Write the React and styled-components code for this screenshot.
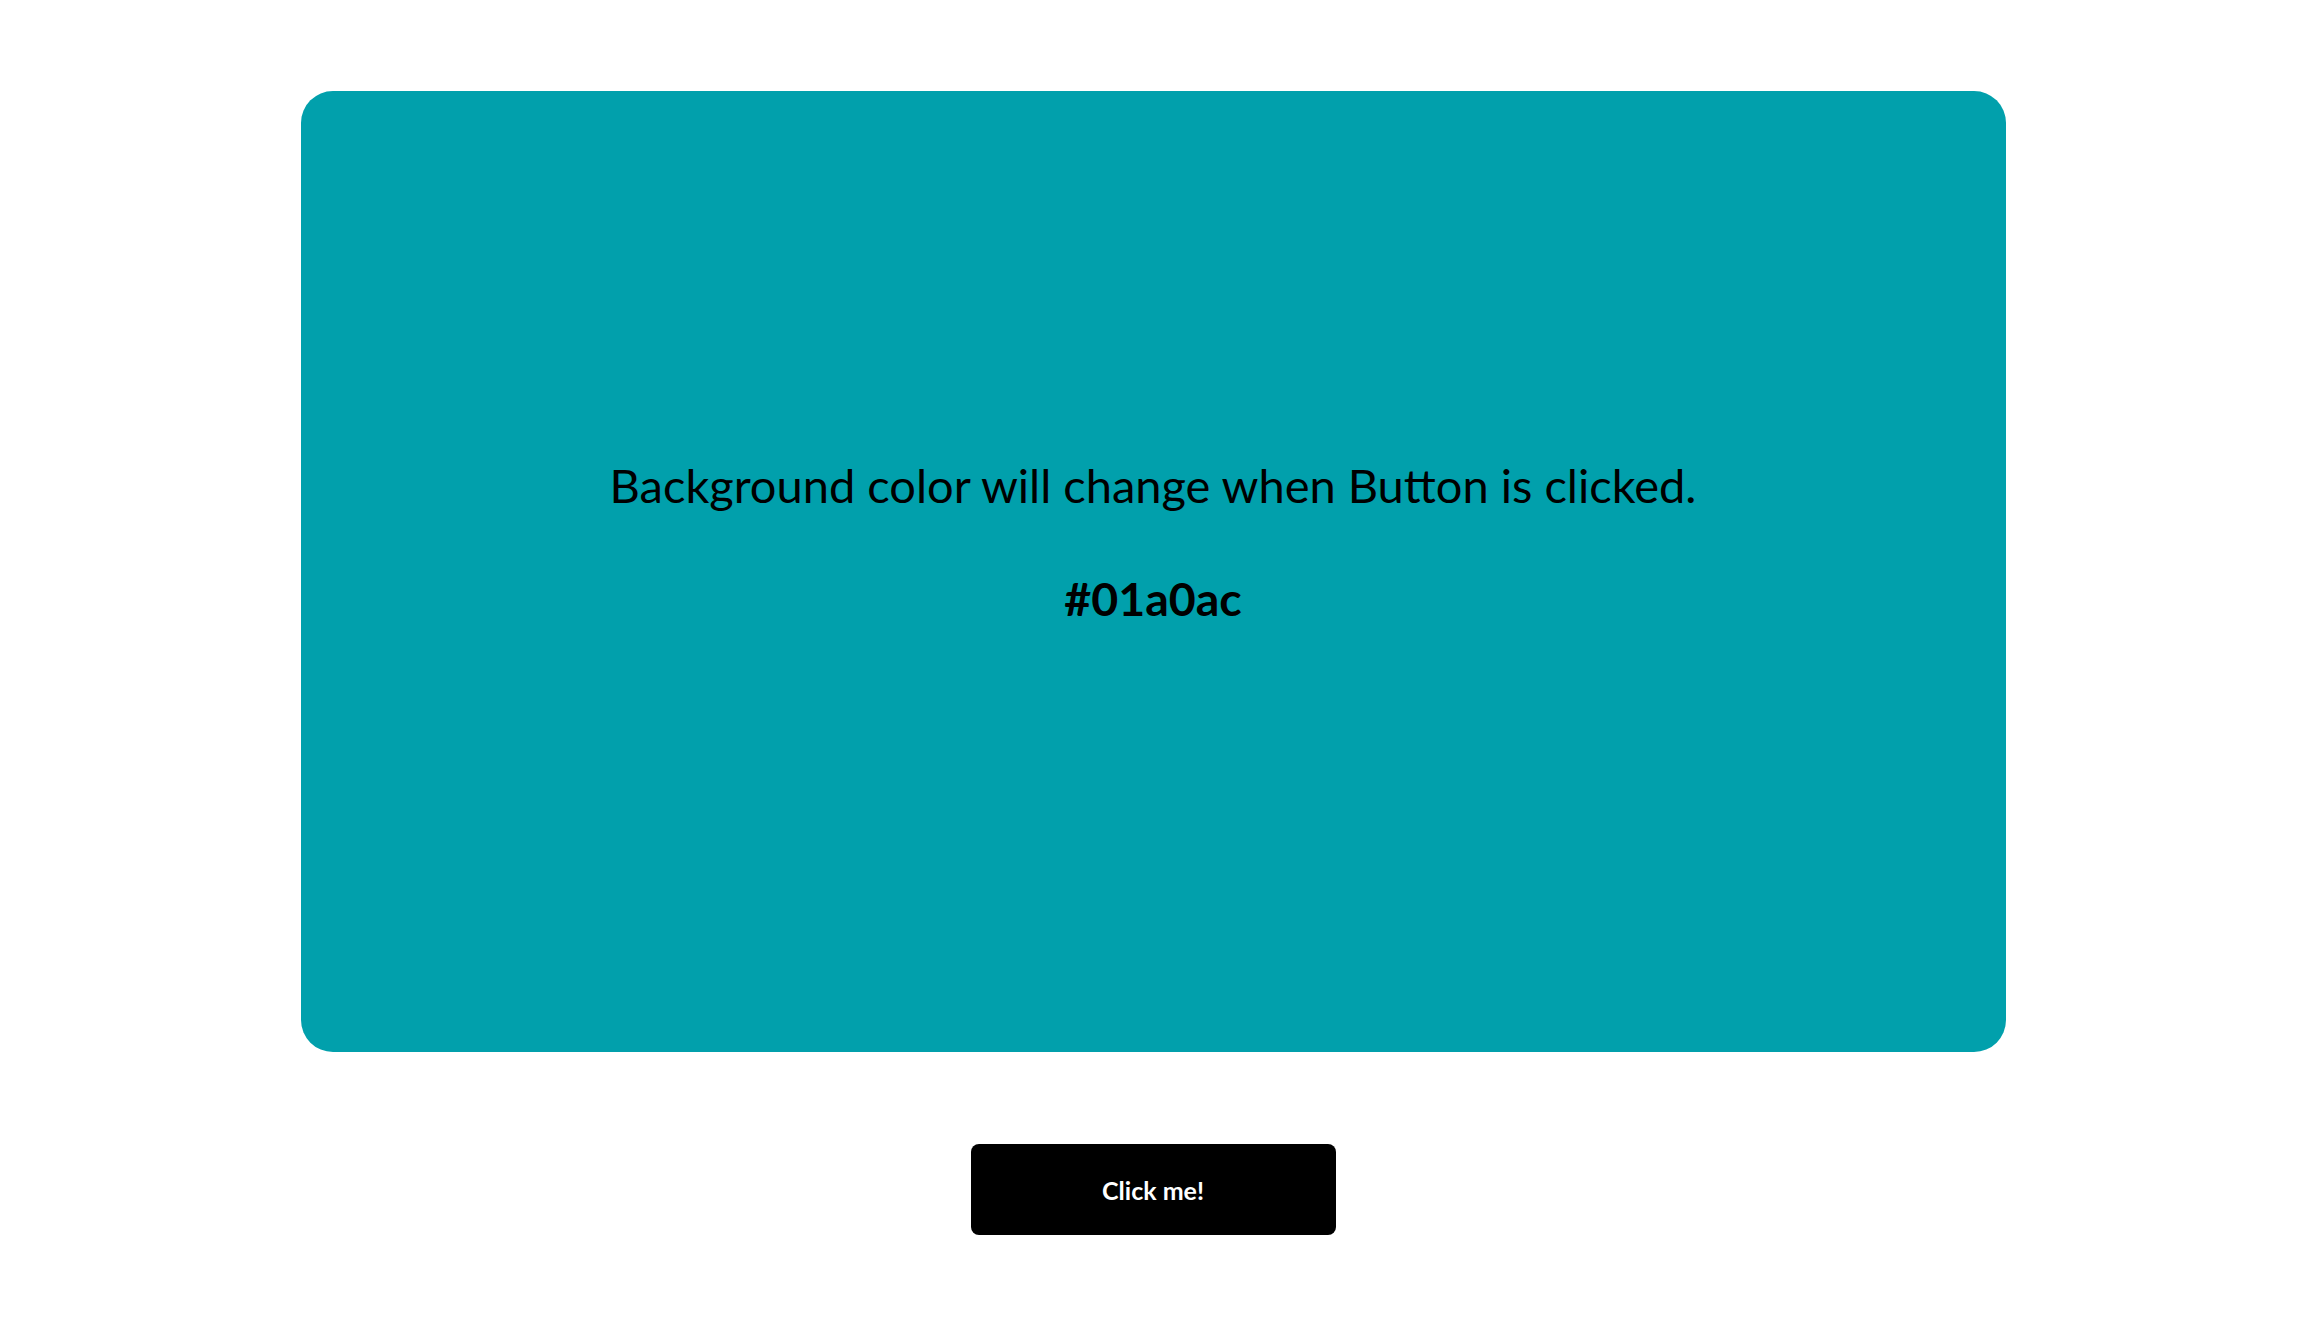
import React, { useState } from 'react';
import styled, { createGlobalStyle } from 'styled-components';

const GlobalStyle = createGlobalStyle`
    html, body {
        margin: 0;
        padding: 0;
        background: #ffffff;
        font-family: "Trebuchet MS", Lato, "Noto Sans", sans-serif;
    }
`;

const Page = styled.div`
    display: flex;
    flex-direction: column;
    align-items: center;
    padding: 91px 0;
    gap: 92px;
`;

const Card = styled.div`
    width: 1705px;
    height: 961px;
    border-radius: 32px;
    background: ${props => props.color};
    display: flex;
    flex-direction: column;
    align-items: center;
    justify-content: center;
    padding-bottom: 60px;
    box-sizing: border-box;
    color: #000000;
`;

const Message = styled.p`
    margin: 0;
    font-size: 47px;
    font-weight: 400;
`;

const Hex = styled.h2`
    margin: 57px 0 0;
    font-size: 46.5px;
    font-weight: 700;
`;

const Button = styled.button`
    width: 365px;
    height: 91px;
    border: none;
    border-radius: 8px;
    background: #000000;
    color: #ffffff;
    font-family: inherit;
    font-size: 25px;
    font-weight: 700;
    cursor: pointer;
`;

const randomColor = () =>
    '#' + Math.floor(Math.random() * 0xffffff).toString(16).padStart(6, '0');

export default function App() {
    const [color, setColor] = useState('#01a0ac');

    return (
        <>
            <GlobalStyle />
            <Page>
                <Card color={color}>
                    <Message>Background color will change when Button is clicked.</Message>
                    <Hex>{color}</Hex>
                </Card>
                <Button onClick={() => setColor(randomColor())}>Click me!</Button>
            </Page>
        </>
    );
}
